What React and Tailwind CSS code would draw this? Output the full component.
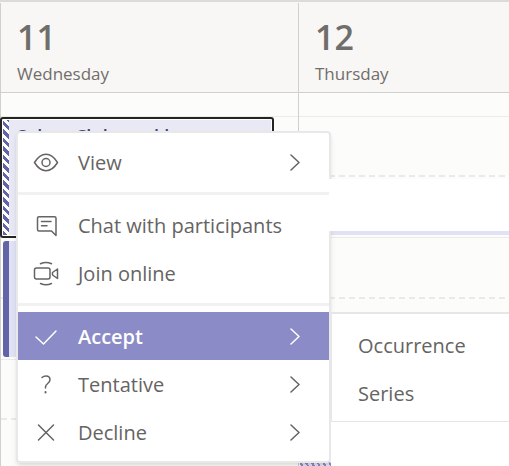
import React from "react";

const days = [
  { number: "11", name: "Wednesday" },
  { number: "12", name: "Thursday" },
];

function Icon({ children, className = "" }) {
  return (
    <svg
      viewBox="0 0 26 26"
      aria-hidden="true"
      className={`h-[26px] w-[26px] shrink-0 fill-none stroke-current ${className}`}
      strokeWidth="1.5"
      strokeLinecap="round"
      strokeLinejoin="round"
    >
      {children}
    </svg>
  );
}

const EyeIcon = () => (
  <Icon>
    <path d="M1.5 12.5C4.5 7.500 8.500 4.300 13 4.300S21.500 7.500 24.500 12.500C21.500 17.500 17.500 20.700 13 20.700S4.500 17.500 1.500 12.500Z" />
    <circle cx="13" cy="12.5" r="4" />
  </Icon>
);

const ChatIcon = () => (
  <Icon>
    <path d="M6 3.700H21.500Q23 3.700 23 5.200V22.500L18.500 18H6Q4.500 18 4.500 16.500V5.200Q4.500 3.700 6 3.700Z" />
    <path d="M8.500 8.500H18M8.500 12.800H14" />
  </Icon>
);

const VideoIcon = () => (
  <Icon>
    <rect x="1.500" y="7" width="15.500" height="11" rx="2" />
    <path d="M24.500 8V17.500L19.500 14V11.500ZM7.500 2.800Q13 .2 18.500 2.800M7.500 22.500Q13 25 18.500 22.500" />
  </Icon>
);

const CheckIcon = () => (
  <Icon>
    <path d="M3 13L10.500 20L23 7" />
  </Icon>
);

const QuestionIcon = () => (
  <Icon>
    <path d="M9 5.500Q10.500 4 13 4C15.500 4 17 5.500 17 7.800C17 11.500 12.500 11.500 12.500 15V16" />
    <path d="M12.500 20V20.400" strokeWidth="2" />
  </Icon>
);

const CloseIcon = () => (
  <Icon>
    <path d="M5.500 5L20.500 20M20.500 5L5.500 20" />
  </Icon>
);

const Chevron = () => (
  <svg
    viewBox="0 0 12 18"
    aria-hidden="true"
    className="ml-auto h-[18px] w-3 shrink-0 fill-none stroke-current"
    strokeWidth="1.5"
    strokeLinecap="round"
    strokeLinejoin="round"
  >
    <path d="M2 1L10 8.500L2 16" />
  </svg>
);

function MenuItem({ icon, label, submenu, active }) {
  return (
    <button
      type="button"
      role="menuitem"
      aria-haspopup={submenu ? "menu" : undefined}
      className={`flex h-12 w-full items-center gap-[19px] pl-[15px] pr-7 pt-[2px] text-left text-[20px] leading-6 ${
        active ? "bg-[#8b8bc7] font-semibold text-white" : "text-[#666462]"
      }`}
    >
      {icon}
      <span className="whitespace-nowrap">{label}</span>
      {submenu && <Chevron />}
    </button>
  );
}

const Separator = () => <hr className="h-[3px] border-0 bg-[#f1f1f1]" />;

function Dashes() {
  return (
    <div className="h-[2px] bg-[repeating-linear-gradient(90deg,#eaeae9_0_6px,transparent_6px_10px)]" />
  );
}

function DayColumn({ selected }) {
  return (
    <div className="flex flex-col border-l border-[#d2d0ce]">
      <div className="h-[24px] border-b border-[#edebe9]" />
      <div className="h-[58px]" />
      <Dashes />
      {selected ? (
        <div className="h-[60px]" />
      ) : (
        <>
          <div className="h-[2px]" />
          <div className="h-14 border-b-4 border-[#e2e2f6] bg-white" />
          <div className="h-[2px]" />
        </>
      )}
      <div className="h-[60px] border-t border-[#edebe9]" />
      <Dashes />
      <div className="h-[60px]" />
      <div className="h-[59px] border-t border-[#edebe9]" />
      <Dashes />
      <div className="grow" />
    </div>
  );
}

export default function App() {
  return (
    <main className="relative flex h-screen flex-col overflow-hidden bg-[#fcfcfa] font-['Open_Sans','Noto_Sans',sans-serif] text-[#666462]">
      <header className="grid shrink-0 grid-cols-[298px_1fr] border-b border-t-2 border-[#d2d0ce] border-t-[#dcdbd9] bg-[#f8f7f5] pt-px">
        {days.map((day) => (
          <div key={day.name} className="border-l border-[#d2d0ce] pb-[6px] pl-4 pt-[15px] text-[#706e6b]">
            <div className="text-[34px] font-semibold leading-[38px]">{day.number}</div>
            <div className="pt-[6px] text-[17px] leading-6">{day.name}</div>
          </div>
        ))}
      </header>
      <section className="grid grow grid-cols-[298px_1fr]">
        <DayColumn selected />
        <DayColumn />
      </section>

      <article className="absolute left-0 top-[117px] flex h-[121px] w-[274px] overflow-hidden rounded-[3px] border-2 border-[#252423] bg-white p-px">
        <div className="w-[6px] shrink-0 bg-[repeating-linear-gradient(45deg,#6264a7_0_3px,white_3px_6px)]" />
        <div className="grow bg-[#e9e9f6] pl-2 pt-[6px] text-[18px] font-semibold leading-5 text-[#464775]">
          Salary Club weekly
        </div>
      </article>
      <article className="absolute left-[3px] top-[241px] h-[116px] w-[270px] rounded-[3px] border-l-[6px] border-[#6264a7] bg-[#e2e2f6]" />
      <div className="absolute left-[300px] top-[462px] h-3 w-[31px] bg-[repeating-linear-gradient(60deg,#8b8bc7_0_2px,#e2e2f6_2px_5px)]" />

      <div
        role="menu"
        aria-label="Meeting options"
        className="absolute left-4 top-[131px] w-[315px] rounded-[4px] border-2 border-[#e8e8e8] bg-white pb-[5px] pt-[5px] shadow-md"
      >
        <MenuItem icon={<EyeIcon />} label="View" submenu />
        <div className="pb-[6px] pt-[6px]">
          <Separator />
        </div>
        <MenuItem icon={<ChatIcon />} label="Chat with participants" />
        <MenuItem icon={<VideoIcon />} label="Join online" />
        <div className="pb-[6px] pt-[6px]">
          <Separator />
        </div>
        <MenuItem icon={<CheckIcon />} label="Accept" submenu active />
        <MenuItem icon={<QuestionIcon />} label="Tentative" submenu />
        <MenuItem icon={<CloseIcon />} label="Decline" submenu />
      </div>

      <div className="absolute left-[329px] right-0 top-[179px] h-[52px] bg-white" />

      <div className="absolute bottom-0 left-[331px] right-0 top-[312px] bg-white">
        <div
          role="menu"
          aria-label="Accept"
          className="border-b border-l border-t-2 border-[#e6e6e6] pb-[3px] pt-2"
        >
          {["Occurrence", "Series"].map((label) => (
            <button
              key={label}
              type="button"
              role="menuitem"
              className="block h-12 w-full pl-[26px] text-left text-[20px] leading-6"
            >
              {label}
            </button>
          ))}
        </div>
      </div>
    </main>
  );
}
